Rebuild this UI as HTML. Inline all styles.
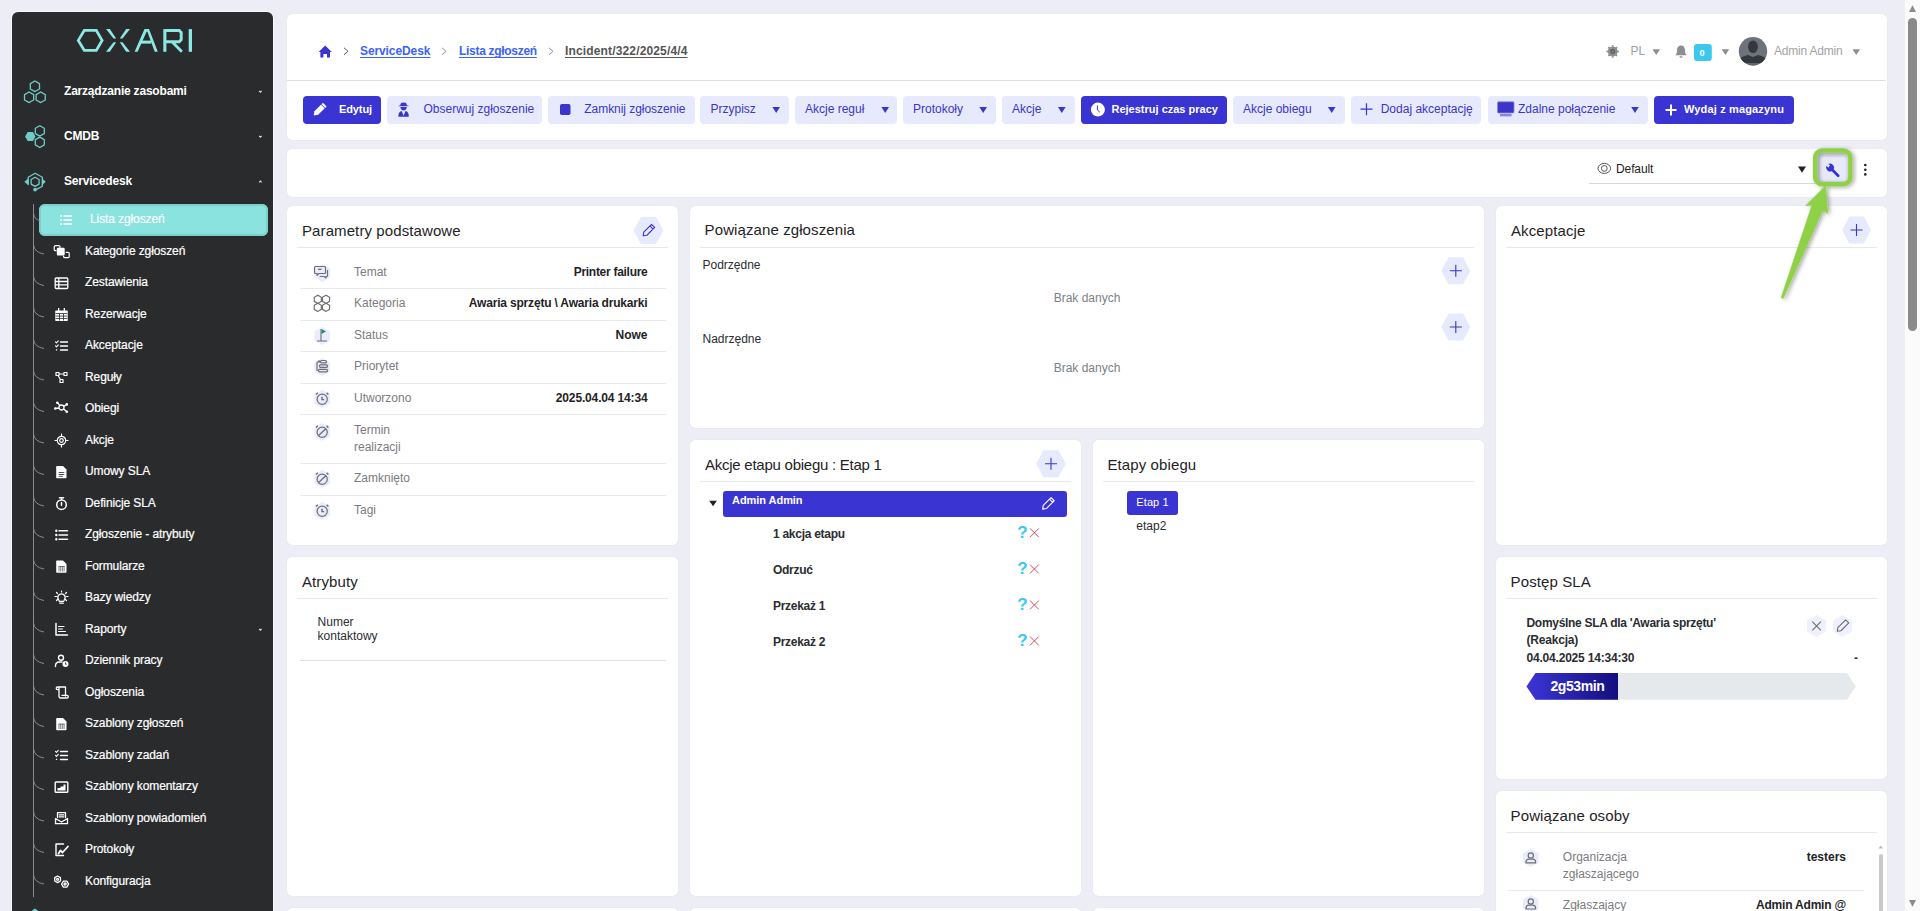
<!DOCTYPE html>
<html><head><meta charset="utf-8">
<style>
*{box-sizing:border-box;margin:0;padding:0}
html,body{width:1920px;height:911px;overflow:hidden;background:#EDEDF6;font-family:"Liberation Sans",sans-serif;position:relative}
.abs{position:absolute}
svg.L{position:absolute;left:0;top:0;width:1920px;height:911px;overflow:visible}
.sb{position:absolute;left:12px;top:12px;width:261px;height:920px;background:#2A2B2D;border-radius:6px;box-shadow:0 0 0 1px #F6F6FB}
.card{position:absolute;background:#fff;border-radius:5px;box-shadow:0 0 1px rgba(0,0,0,.15)}
.t{position:absolute;white-space:nowrap;line-height:14px}
.mi{position:absolute;left:64px;color:#fff;font-size:12px;font-weight:700;letter-spacing:-0.2px;white-space:nowrap;line-height:14px}
.si{position:absolute;left:85px;color:#fff;font-size:12px;font-weight:400;white-space:nowrap;line-height:14px;-webkit-text-stroke:0.2px #fff;letter-spacing:-0.1px}
.btn{position:absolute;top:96px;height:28px;border-radius:4px;background:#E7EAFD;color:#3B35C9;font-size:12px;line-height:28px;white-space:nowrap}
.btn.p{background:#3A34D2;color:#fff;font-weight:700}
.btn span{position:absolute;top:0}
.sep{position:absolute;height:1px;background:#E4E6EB}
.ptitle{position:absolute;font-size:15px;color:#1F2327;white-space:nowrap;line-height:18px}
.lbl{position:absolute;font-size:12px;color:#7B7B80;white-space:nowrap;line-height:17px}
.val{position:absolute;font-size:12px;color:#1F2327;font-weight:700;white-space:nowrap;line-height:14px}
</style></head>
<body>
<div class="sb"></div>
<div class="abs" style="left:39px;top:204px;width:229px;height:32px;background:#8AE3DF;border-radius:6px;box-shadow:inset 0 0 0 2px #7CCFCB"></div>
<svg class="L" viewBox="0 0 1920 911">
<g fill="none" stroke="#8BE8E3" stroke-width="2.8" stroke-linejoin="miter">
<polygon points="78.3,40.4 84.3,30.4 96.3,30.4 102.1,40.4 96.3,50.4 84.3,50.4"/>
</g>
<g fill="#8BE8E3">
<polygon points="106,29 109.8,29 116.2,38.5 113.5,38.5"/>
<polygon points="106,51.8 109.8,51.8 116.2,42.3 113.5,42.3"/>
<polygon points="130,29 126.2,29 119.8,38.5 122.5,38.5"/>
<polygon points="130,51.8 126.2,51.8 119.8,42.3 122.5,42.3"/>
<polygon points="134.6,51.8 137.6,51.8 146.6,31.7 147.4,31.7 154.7,51.8 157.8,51.8 149,29.1 144.5,29.1"/>
<rect x="140.6" y="40.6" width="10.6" height="3"/>
<rect x="163.3" y="29.1" width="3.1" height="22.7"/>
</g>
<path d="M164.8,30.5 H179.2 L181.2,32.6 V39.7 L179.2,41.8 H164.8 M172.5,42.3 L181.9,51.8" fill="none" stroke="#8BE8E3" stroke-width="2.9"/>
<rect x="188.7" y="29.1" width="3.3" height="22.7" fill="#8BE8E3"/>
<g fill="none" stroke="#71CBC6" stroke-width="1.3">
<polygon points="34.90,91.60 30.31,88.95 30.31,83.65 34.90,81.00 39.49,83.65 39.49,88.95"/>
<polygon points="29.10,102.60 24.51,99.95 24.51,94.65 29.10,92.00 33.69,94.65 33.69,99.95"/>
<polygon points="40.70,102.60 36.11,99.95 36.11,94.65 40.70,92.00 45.29,94.65 45.29,99.95"/>
<polygon points="39.80,136.10 35.30,133.50 35.30,128.30 39.80,125.70 44.30,128.30 44.30,133.50"/>
<polygon points="39.80,147.50 35.30,144.90 35.30,139.70 39.80,137.10 44.30,139.70 44.30,144.90"/>
</g>
<polygon points="35.50,136.60 32.90,141.10 27.70,141.10 25.10,136.60 27.70,132.10 32.90,132.10" fill="#71CBC6"/>
<g fill="none" stroke="#71CBC6" stroke-width="1.3" stroke-linejoin="round">
<polygon points="35.10,186.40 31.12,184.10 31.12,179.50 35.10,177.20 39.08,179.50 39.08,184.10"/>
<path d="M28.2,184.6 V177.3 L35.1,173.3 L42.4,177.3 V186.2 L36,189.6"/>
</g>
<g fill="#71CBC6"><polygon points="24.3,181.8 28.6,178.2 28.6,185.4"/><polygon points="45.8,181.8 41.8,178.2 41.8,185.4"/><circle cx="35.1" cy="189.6" r="1.9"/></g>
<g fill="none" stroke="#E6E6E6" stroke-width="1.1"><path d="M259.2,90.9 L260.4,92.2 L261.6,90.9"/><path d="M259.2,135.9 L260.4,137.2 L261.6,135.9"/><path d="M259.2,182.3 L260.4,181 L261.6,182.3"/><path d="M259.2,628.9 L260.4,630.2 L261.6,628.9"/></g>
<g fill="none" stroke="#8A8A8A" stroke-width="1">
<path d="M33.5,204 V897"/>
<path d="M33.5,213.5 Q34.5,219.5 39.5,220.5"/>
<path d="M33.5,245.0 Q34.5,252.5 44,254.0"/>
<path d="M33.5,276.5 Q34.5,284.0 44,285.5"/>
<path d="M33.5,308.0 Q34.5,315.5 44,317.0"/>
<path d="M33.5,339.5 Q34.5,347.0 44,348.5"/>
<path d="M33.5,371.0 Q34.5,378.5 44,380.0"/>
<path d="M33.5,402.5 Q34.5,410.0 44,411.5"/>
<path d="M33.5,434.0 Q34.5,441.5 44,443.0"/>
<path d="M33.5,465.5 Q34.5,473.0 44,474.5"/>
<path d="M33.5,497.0 Q34.5,504.5 44,506.0"/>
<path d="M33.5,528.5 Q34.5,536.0 44,537.5"/>
<path d="M33.5,560.0 Q34.5,567.5 44,569.0"/>
<path d="M33.5,591.5 Q34.5,599.0 44,600.5"/>
<path d="M33.5,623.0 Q34.5,630.5 44,632.0"/>
<path d="M33.5,654.5 Q34.5,662.0 44,663.5"/>
<path d="M33.5,686.0 Q34.5,693.5 44,695.0"/>
<path d="M33.5,717.5 Q34.5,725.0 44,726.5"/>
<path d="M33.5,749.0 Q34.5,756.5 44,758.0"/>
<path d="M33.5,780.5 Q34.5,788.0 44,789.5"/>
<path d="M33.5,812.0 Q34.5,819.5 44,821.0"/>
<path d="M33.5,843.5 Q34.5,851.0 44,852.5"/>
<path d="M33.5,875.0 Q34.5,882.5 44,884.0"/>
</g>
<g transform="translate(61.5,251.5)"><path d="M-6,-5.8 h3.2 a1.3,1.3 0 0 1 1.3,1.3 v0.5 M-5.5,-0.8 h-0.5 a1.3,1.3 0 0 1 -1.3,-1.3 v-2.4 a1.3,1.3 0 0 1 1.3,-1.3" fill="none" stroke="#fff" stroke-width="1.2" stroke-linecap="round" stroke-linejoin="round"/><path d="M-3.5,-3.8 h5.5 a1.2,1.2 0 0 1 1.2,1.2 v5.3 a1.2,1.2 0 0 1 -1.2,1.2 h-5.5 a1.2,1.2 0 0 1 -1.2,-1.2 v-5.3 a1.2,1.2 0 0 1 1.2,-1.2z" fill="#fff"/><path d="M4.6,0.8 h1.8 a1.3,1.3 0 0 1 1.3,1.3 v2.8 a1.3,1.3 0 0 1 -1.3,1.3 h-3 a1.3,1.3 0 0 1 -1.3,-1.3 v-0.3" fill="none" stroke="#fff" stroke-width="1.2" stroke-linecap="round" stroke-linejoin="round"/></g>
<g transform="translate(61.5,283.0)"><path d="M-5.3,-5 h10.6 a1,1 0 0 1 1,1 v8.5 a1,1 0 0 1 -1,1 h-10.6 a1,1 0 0 1 -1,-1 v-8.5 a1,1 0 0 1 1,-1z M-6,-1.5 H6 M-6,1.8 H6 M-2.7,-5 V5.5" fill="none" stroke="#fff" stroke-width="1.3" stroke-linecap="round" stroke-linejoin="round"/></g>
<g transform="translate(61.5,314.5)"><path d="M-5.5,-4 h11 a0.8,0.8 0 0 1 .8,.8 v9 a.8,.8 0 0 1 -.8,.8 h-11 a.8,.8 0 0 1 -.8,-.8 v-9 a.8,.8 0 0 1 .8,-.8z M-3.5,-6.5 h1.3 v2.5 h-1.3z M2.2,-6.5 h1.3 v2.5 h-1.3z" fill="#fff"/><path d="M-6,-1 H6 M-6,1.6 H6 M-6,4 H6 M-2,-1 V6 M2,-1 V6" stroke="#2A2B2D" stroke-width="0.8"/></g>
<g transform="translate(61.5,346.0)"><path d="M-6,-4.2 L-5,-3.2 L-3.2,-5.2 M-6,-0.2 L-5,0.8 L-3.2,-1.2" fill="none" stroke="#fff" stroke-width="1.1" stroke-linecap="round" stroke-linejoin="round"/><path d="M-1,-4 H6 M-1,0 H6 M-1,4 H6" fill="none" stroke="#fff" stroke-width="1.4" stroke-linecap="round" stroke-linejoin="round"/><path d="M-5.6,3.2 h1.3 v1.3 h-1.3z" fill="#fff"/></g>
<g transform="translate(61.5,377.5)"><path d="M-5.5,-5 h3 v3 h-3z M2.5,-5 h3 v3 h-3z M-1.5,2 h3 v3 h-3z M-2.5,-3.5 H2.5 M-3.5,-2 L-1,2" fill="none" stroke="#fff" stroke-width="1.2" stroke-linecap="round" stroke-linejoin="round"/></g>
<g transform="translate(61.5,409.0)"><path d="M0,-1.5 m-2.5,0 a2.5,2.5 0 1 0 5,0 a2.5,2.5 0 1 0 -5,0 M-2,-3.5 L-3.5,-6 M2.2,-2.5 L5,-4.5 M2.2,0 L5,2.5 M-2.5,-1 L-6,-0.5" fill="none" stroke="#fff" stroke-width="1.3" stroke-linecap="round" stroke-linejoin="round"/><path d="M-4.2,-6.2 m-1.3,0 a1.3,1.3 0 1 0 2.6,0 a1.3,1.3 0 1 0 -2.6,0 M5.3,-4.6 m-1.3,0 a1.3,1.3 0 1 0 2.6,0 a1.3,1.3 0 1 0 -2.6,0 M5.3,2.8 m-1.3,0 a1.3,1.3 0 1 0 2.6,0 a1.3,1.3 0 1 0 -2.6,0 M-6.2,-0.5 m-1.3,0 a1.3,1.3 0 1 0 2.6,0 a1.3,1.3 0 1 0 -2.6,0" fill="#fff"/></g>
<g transform="translate(61.5,440.5)"><path d="M-4.2,0 a4.2,4.2 0 1 0 8.4,0 a4.2,4.2 0 1 0 -8.4,0 M-1.8,0 a1.8,1.8 0 1 0 3.6,0 a1.8,1.8 0 1 0 -3.6,0 M0,-6.5 V-4.2 M0,4.2 V6.5 M-6.5,0 H-4.2 M4.2,0 H6.5" fill="none" stroke="#fff" stroke-width="1.2" stroke-linecap="round" stroke-linejoin="round"/></g>
<g transform="translate(61.5,472.0)"><path d="M-4.5,-6 h6 l3.5,3.5 v8 a.8,.8 0 0 1 -.8,.8 h-8.7 a.8,.8 0 0 1 -.8,-.8 v-10.7 a.8,.8 0 0 1 .8,-.8z" fill="#fff"/><path d="M-2.8,0.5 H2.8 M-2.8,2.5 H2.8 M-2.8,4.3 H1.5" stroke="#2A2B2D" stroke-width="0.8"/></g>
<g transform="translate(61.5,503.5)"><path d="M0,1.2 m-4.8,0 a4.8,4.8 0 1 0 9.6,0 a4.8,4.8 0 1 0 -9.6,0 M-2,-5.8 H2 M0,-5.8 V-3.6 M0,-1 V1.8" fill="none" stroke="#fff" stroke-width="1.5" stroke-linecap="round" stroke-linejoin="round"/></g>
<g transform="translate(61.5,535.0)"><path d="M-2.5,-4.2 H6 M-2.5,0 H6 M-2.5,4.2 H6" fill="none" stroke="#fff" stroke-width="1.5" stroke-linecap="round" stroke-linejoin="round"/><path d="M-5.2,-4.2 m-1.2,0 a1.2,1.2 0 1 0 2.4,0 a1.2,1.2 0 1 0 -2.4,0 M-5.2,0 m-1.2,0 a1.2,1.2 0 1 0 2.4,0 a1.2,1.2 0 1 0 -2.4,0 M-5.2,4.2 m-1.2,0 a1.2,1.2 0 1 0 2.4,0 a1.2,1.2 0 1 0 -2.4,0" fill="#fff"/></g>
<g transform="translate(61.5,566.5)"><path d="M-4.5,-6 h6 l3.5,3.5 v8 a.8,.8 0 0 1 -.8,.8 h-8.7 a.8,.8 0 0 1 -.8,-.8 v-10.7 a.8,.8 0 0 1 .8,-.8z" fill="#fff"/><path d="M-2.5,0 V5 M-0.8,0 V5 M0.9,0 V5 M2.6,0 V5 M-3,0 H3" stroke="#2A2B2D" stroke-width="0.6"/></g>
<g transform="translate(61.5,598.0)"><path d="M-3,1.5 a3.6,3.6 0 1 1 6,0 l-0.8,1.8 h-4.4z M-1.8,5.2 H1.8 M-6.5,-1.5 H-5 M5,-1.5 H6.5 M-5,-5.5 L-4,-4.5 M5,-5.5 L4,-4.5 M-5,2.5 L-4,1.5 M5,2.5 L4,1.5 M0,-7 V-6" fill="none" stroke="#fff" stroke-width="1.2" stroke-linecap="round" stroke-linejoin="round"/></g>
<g transform="translate(61.5,629.5)"><path d="M-5.5,-6 V5.5 H6" fill="none" stroke="#fff" stroke-width="1.5" stroke-linecap="round" stroke-linejoin="round"/><path d="M-3,-3 H2.5 M-3,-0.5 H1 M-3,2 H4" fill="none" stroke="#fff" stroke-width="1.1" stroke-linecap="round" stroke-linejoin="round"/></g>
<g transform="translate(61.5,661.0)"><path d="M-3,-3.3 a2.5,2.5 0 1 0 5,0 a2.5,2.5 0 1 0 -5,0 M-6,5.5 v-1 a3.5,3.5 0 0 1 3.5,-3.5 h3" fill="none" stroke="#fff" stroke-width="1.4" stroke-linecap="round" stroke-linejoin="round"/><path d="M4,3 m-3,0 a3,3 0 1 0 6,0 a3,3 0 1 0 -6,0" fill="#fff"/><path d="M4,1.3 V3.2 H5.3" stroke="#2A2B2D" stroke-width="0.8" fill="none"/></g>
<g transform="translate(61.5,692.5)"><path d="M-4,-5.5 H4 V3.5 M-4,-5.5 a1.3,1.3 0 0 0 -1.3,1.3 a1.3,1.3 0 0 0 1.3,1.3 H-2.5 M-2.5,-4.5 V4 a1.5,1.5 0 0 0 1.5,1.5 H5.5 a1.3,1.3 0 0 0 0,-2.6 H0.5" fill="none" stroke="#fff" stroke-width="1.3" stroke-linecap="round" stroke-linejoin="round"/></g>
<g transform="translate(61.5,724.0)"><path d="M-4.5,-6 h6 l3.5,3.5 v8 a.8,.8 0 0 1 -.8,.8 h-8.7 a.8,.8 0 0 1 -.8,-.8 v-10.7 a.8,.8 0 0 1 .8,-.8z" fill="#fff"/><path d="M-2.5,0 V5 M-0.8,0 V5 M0.9,0 V5 M2.6,0 V5 M-3,0 H3" stroke="#2A2B2D" stroke-width="0.6"/></g>
<g transform="translate(61.5,755.5)"><path d="M-6,-4.2 L-5,-3.2 L-3.2,-5.2 M-6,-0.2 L-5,0.8 L-3.2,-1.2" fill="none" stroke="#fff" stroke-width="1.1" stroke-linecap="round" stroke-linejoin="round"/><path d="M-1,-4 H6 M-1,0 H6 M-1,4 H6" fill="none" stroke="#fff" stroke-width="1.4" stroke-linecap="round" stroke-linejoin="round"/><path d="M-5.6,3.2 h1.3 v1.3 h-1.3z" fill="#fff"/></g>
<g transform="translate(61.5,787.0)"><path d="M-5.5,-5 h11 a.8,.8 0 0 1 .8,.8 v8.6 a.8,.8 0 0 1 -.8,.8 h-11 a.8,.8 0 0 1 -.8,-.8 v-8.6 a.8,.8 0 0 1 .8,-.8z" fill="none" stroke="#fff" stroke-width="1.4" stroke-linecap="round" stroke-linejoin="round"/><path d="M-4,3.5 v-2.5 h3 v-1.5 h3 v-2 h2 v6z" fill="#fff"/></g>
<g transform="translate(61.5,818.5)"><path d="M-6,0 V5.2 H6 V0 L0,3.5 Z M-4,-1 V-5.8 H4 V-1 M-2.2,-3.6 H2.2 M-2.2,-1.6 H2.2" fill="none" stroke="#fff" stroke-width="1.3" stroke-linecap="round" stroke-linejoin="round"/></g>
<g transform="translate(61.5,850.0)"><path d="M2,-6 H-5.5 V5.5 H2 M-5.5,5.5 V-6" fill="none" stroke="#fff" stroke-width="1.4" stroke-linecap="round" stroke-linejoin="round"/><path d="M-3,3.5 L-1,0.5 L1,2.5 L6.5,-3.5" fill="none" stroke="#fff" stroke-width="1.8" stroke-linecap="round" stroke-linejoin="round"/></g>
<g transform="translate(61.5,881.5)"><g fill="none" stroke="#fff" stroke-width="1.3" stroke-linejoin="round"><polygon points="-1.04,-0.55 -3.90,1.10 -6.76,-0.55 -6.76,-3.85 -3.90,-5.50 -1.04,-3.85"/><polygon points="7.10,2.60 5.35,5.63 1.85,5.63 0.10,2.60 1.85,-0.43 5.35,-0.43"/><circle cx="-3.9" cy="-2.2" r="1"/><circle cx="3.6" cy="2.6" r="1.1"/></g></g>
<g transform="translate(66,220)" fill="#fff"><circle cx="-5" cy="-4" r="1.1"/><circle cx="-5" cy="0" r="1.1"/><circle cx="-5" cy="4" r="1.1"/><path d="M-2.5,-4 H6 M-2.5,0 H6 M-2.5,4 H6" stroke="#fff" stroke-width="1.4"/></g>
</svg>
<div class="si" style="left:90px;top:212px;-webkit-text-stroke:0.15px #fff">Lista zgłoszeń</div>
<div class="mi" style="top:84px">Zarządzanie zasobami</div>
<div class="mi" style="top:129px">CMDB</div>
<div class="mi" style="top:174px">Servicedesk</div>
<div class="si" style="top:243.9px">Kategorie zgłoszeń</div>
<div class="si" style="top:275.4px">Zestawienia</div>
<div class="si" style="top:306.9px">Rezerwacje</div>
<div class="si" style="top:338.4px">Akceptacje</div>
<div class="si" style="top:369.9px">Reguły</div>
<div class="si" style="top:401.4px">Obiegi</div>
<div class="si" style="top:432.9px">Akcje</div>
<div class="si" style="top:464.4px">Umowy SLA</div>
<div class="si" style="top:495.9px">Definicje SLA</div>
<div class="si" style="top:527.4px">Zgłoszenie - atrybuty</div>
<div class="si" style="top:558.9px">Formularze</div>
<div class="si" style="top:590.4px">Bazy wiedzy</div>
<div class="si" style="top:621.9px">Raporty</div>
<div class="si" style="top:653.4px">Dziennik pracy</div>
<div class="si" style="top:684.9px">Ogłoszenia</div>
<div class="si" style="top:716.4px">Szablony zgłoszeń</div>
<div class="si" style="top:747.9px">Szablony zadań</div>
<div class="si" style="top:779.4px">Szablony komentarzy</div>
<div class="si" style="top:810.9px">Szablony powiadomień</div>
<div class="si" style="top:842.4px">Protokoły</div>
<div class="si" style="top:873.9px">Konfiguracja</div>
<div class="card" style="left:287px;top:14px;width:1600px;height:126px"></div>
<div class="sep" style="left:287px;top:80px;width:1599px;background:#DDE1E6"></div>
<div class="card" style="left:287px;top:149px;width:1600px;height:48px"></div>
<div class="t" style="left:360px;top:44px;font-size:12px;font-weight:700;text-decoration:underline;text-underline-offset:2px;text-decoration-thickness:1px;color:#3D63F5;letter-spacing:-0.1px">ServiceDesk</div>
<div class="t" style="left:459px;top:44px;font-size:12px;font-weight:700;text-decoration:underline;text-underline-offset:2px;text-decoration-thickness:1px;color:#3D63F5;letter-spacing:-0.3px">Lista zgłoszeń</div>
<div class="t" style="left:565px;top:44px;font-size:12px;font-weight:700;text-decoration:underline;text-underline-offset:2px;text-decoration-thickness:1px;color:#555;letter-spacing:0.15px">Incident/322/2025/4/4</div>
<div class="btn p" style="left:303px;width:78px"></div>
<div class="btn " style="left:387px;width:155px"></div>
<div class="btn " style="left:548px;width:147px"></div>
<div class="btn " style="left:700px;width:89px"></div>
<div class="btn " style="left:795px;width:102px"></div>
<div class="btn " style="left:903px;width:93px"></div>
<div class="btn " style="left:1002px;width:73px"></div>
<div class="btn p" style="left:1081px;width:146px"></div>
<div class="btn " style="left:1233px;width:111.5px"></div>
<div class="btn " style="left:1350.5px;width:130.5px"></div>
<div class="btn " style="left:1488px;width:160px"></div>
<div class="btn p" style="left:1654px;width:140px"></div>
<svg class="L" viewBox="0 0 1920 911">
<path d="M318.7,52 L325.2,45.6 L331.8,52 H330 V57.6 H327 V54 H323.4 V57.6 H320.4 V52 Z" fill="#3A34D2"/>
<path d="M344,47.8 L348,51.3 L344,54.8" fill="none" stroke="#555" stroke-width="1"/>
<path d="M442,47.8 L446,51.3 L442,54.8" fill="none" stroke="#8C88E8" stroke-width="1"/>
<path d="M549,47.8 L553,51.3 L549,54.8" fill="none" stroke="#8C88E8" stroke-width="1"/>
<polygon points="1617.19,50.50 1618.86,50.76 1618.86,52.24 1617.19,52.50 1616.58,53.96 1617.58,55.33 1616.53,56.38 1615.16,55.38 1613.70,55.99 1613.44,57.66 1611.96,57.66 1611.70,55.99 1610.24,55.38 1608.87,56.38 1607.82,55.33 1608.82,53.96 1608.21,52.50 1606.54,52.24 1606.54,50.76 1608.21,50.50 1608.82,49.04 1607.82,47.67 1608.87,46.62 1610.24,47.62 1611.70,47.01 1611.96,45.34 1613.44,45.34 1613.70,47.01 1615.16,47.62 1616.53,46.62 1617.58,47.67 1616.58,49.04" fill="#8E8E8E"/><circle cx="1612.7" cy="51.5" r="4.8" fill="#8E8E8E"/><circle cx="1612.7" cy="51.5" r="2.4" fill="#5A5A5A"/><circle cx="1612.7" cy="51.5" r="1.3" fill="#fff" fill-opacity="0.25"/>
<path d="M1652.5,49.2 H1660 L1656.25,55 Z" fill="#8E8E8E"/>
<path d="M1675.2,55.2 C1676.8,54 1677,52.5 1677,50 C1677,47.5 1678.7,45.6 1681,45.6 C1683.3,45.6 1685,47.5 1685,50 C1685,52.5 1685.2,54 1686.8,55.2 Z M1679.4,56.2 H1682.6 A1.6,1.6 0 0 1 1679.4,56.2 Z" fill="#8E8E8E"/>
<rect x="1694" y="44" width="17.8" height="17" rx="3" fill="#3CC8EE"/>
<path d="M1721.7,49.2 H1729.2 L1725.45,55 Z" fill="#8E8E8E"/>
<clipPath id="av"><circle cx="1753" cy="51.3" r="14.2"/></clipPath><circle cx="1753" cy="51.3" r="14.2" fill="#6C737A"/><g clip-path="url(#av)" fill="#34373B"><ellipse cx="1753" cy="46.8" rx="4.9" ry="6.3"/><path d="M1738,63 C1739,58 1743,56 1748,55 L1753,57 L1758,55 C1763,56 1767,58 1768,63 Z"/><rect x="1738" y="63" width="30" height="4" fill="#5F666C"/></g>
<path d="M1852.5,49.2 H1860 L1856.25,55 Z" fill="#8E8E8E"/>
<g transform="translate(319.8,109.5) rotate(45)"><path d="M-2.6,-7 H2.6 V5 L0,8.6 L-2.6,5 Z" fill="#fff"/><path d="M-2.6,-4.6 H2.6" stroke="#3A34D2" stroke-width="0.9"/></g>
<g fill="#3B35C9" transform="translate(403.6,109.6) scale(0.82) translate(-403.6,-109.4)"><path d="M399.5,104.3 C400,101.5 400.6,100.7 403.6,100.7 C406.6,100.7 407.2,101.5 407.7,104.3 H409.5 V105.4 H397.7 V104.3 Z"/><path d="M399.8,106.2 H407.4 C407.4,108.8 405.8,110.6 403.6,110.6 C401.4,110.6 399.8,108.8 399.8,106.2 Z"/><path d="M397.2,118.2 C397.2,113.5 398.5,111.4 401.3,111 L403.6,117 L405.9,111 C408.7,111.4 410,113.5 410,118.2 Z"/></g>
<rect x="560" y="104" width="10.5" height="11" rx="1.8" fill="#3B35C9"/>
<path d="M772.4,107 H780.0 L776.1999999999999,113 Z" fill="#3B35C9"/>
<path d="M881.4,107 H889.0 L885.1999999999999,113 Z" fill="#3B35C9"/>
<path d="M979.4,107 H987.0 L983.1999999999999,113 Z" fill="#3B35C9"/>
<path d="M1058,107 H1065.6 L1061.8,113 Z" fill="#3B35C9"/>
<path d="M1327.9,107 H1335.5 L1331.7,113 Z" fill="#3B35C9"/>
<path d="M1631.2,107 H1638.8 L1635.0,113 Z" fill="#3B35C9"/>
<circle cx="1097.9" cy="109.6" r="7" fill="#fff"/><path d="M1097.4,105.5 V110 L1099.8,112.2" fill="none" stroke="#3A34D2" stroke-width="1"/>
<path d="M1366.5,103.2 V115.2 M1360.5,109.2 H1372.5" stroke="#3B35C9" stroke-width="1.2"/>
<rect x="1497.5" y="101.8" width="16.5" height="11.2" rx="1" fill="#3B35C9" stroke="#8B87E0" stroke-width="0.8"/><rect x="1500" y="113.8" width="11.5" height="2.6" fill="#8B87E0"/>
<path d="M1671,104.5 V115.5 M1665.5,110 H1676.5" stroke="#fff" stroke-width="2"/>
</svg>
<svg class="L" viewBox="0 0 1920 911">
<g fill="none" stroke="#555" stroke-width="1"><ellipse cx="1604.3" cy="168.4" rx="6.3" ry="5"/><circle cx="1604.3" cy="168.4" r="2.9"/></g>
<path d="M1798,166.6 H1806 L1802,172.8 Z" fill="#222"/>
<g fill="#222"><circle cx="1865.3" cy="165" r="1.3"/><circle cx="1865.3" cy="169.7" r="1.3"/><circle cx="1865.3" cy="174.4" r="1.3"/></g>
</svg>
<div class="t" style="left:339px;top:102px;font-size:12px;color:#fff;font-weight:700;font-size:11px;letter-spacing:-0.1px">Edytuj</div>
<div class="t" style="left:423.5px;top:102px;font-size:12px;color:#3B35C9;font-weight:400;">Obserwuj zgłoszenie</div>
<div class="t" style="left:584.3px;top:102px;font-size:12px;color:#3B35C9;font-weight:400;letter-spacing:-0.05px">Zamknij zgłoszenie</div>
<div class="t" style="left:710.5px;top:102px;font-size:12px;color:#3B35C9;font-weight:400;">Przypisz</div>
<div class="t" style="left:805px;top:102px;font-size:12px;color:#3B35C9;font-weight:400;">Akcje reguł</div>
<div class="t" style="left:913px;top:102px;font-size:12px;color:#3B35C9;font-weight:400;">Protokoły</div>
<div class="t" style="left:1012px;top:102px;font-size:12px;color:#3B35C9;font-weight:400;">Akcje</div>
<div class="t" style="left:1111.5px;top:102px;font-size:12px;color:#fff;font-weight:700;font-size:11px">Rejestruj czas pracy</div>
<div class="t" style="left:1243px;top:102px;font-size:12px;color:#3B35C9;font-weight:400;">Akcje obiegu</div>
<div class="t" style="left:1380.7px;top:102px;font-size:12px;color:#3B35C9;font-weight:400;">Dodaj akceptację</div>
<div class="t" style="left:1518px;top:102px;font-size:12px;color:#3B35C9;font-weight:400;">Zdalne połączenie</div>
<div class="t" style="left:1684px;top:102px;font-size:12px;color:#fff;font-weight:700;font-size:11px;letter-spacing:0.15px">Wydaj z magazynu</div>
<div class="t" style="left:1630.5px;top:43.5px;font-size:12px;color:#A0A0A0">PL</div>
<div class="t" style="left:1699.5px;top:46px;font-size:9px;color:#fff;font-weight:700">0</div>
<div class="t" style="left:1774px;top:43.5px;font-size:12px;color:#A3A3A3;letter-spacing:-0.2px">Admin Admin</div>
<div class="abs" style="left:1589px;top:183px;width:226px;height:1px;background:#D5D9DF"></div>
<div class="t" style="left:1616px;top:162px;font-size:12px;color:#222;letter-spacing:-0.1px">Default</div>
<div class="card" style="left:287px;top:206px;width:391px;height:339px"></div>
<div class="card" style="left:690px;top:206px;width:794px;height:222px"></div>
<div class="card" style="left:1496px;top:206px;width:391px;height:339px"></div>
<div class="card" style="left:690px;top:440px;width:391px;height:456px"></div>
<div class="card" style="left:1093px;top:440px;width:391px;height:456px"></div>
<div class="card" style="left:287px;top:557px;width:391px;height:339px"></div>
<div class="card" style="left:1496px;top:557px;width:391px;height:222px"></div>
<div class="card" style="left:1496px;top:791px;width:391px;height:200px"></div>
<div class="card" style="left:287px;top:908px;width:391px;height:100px"></div>
<div class="card" style="left:690px;top:908px;width:391px;height:100px"></div>
<div class="card" style="left:1093px;top:908px;width:391px;height:100px"></div>
<div class="sep" style="left:297px;top:247px;width:371px;background:#E6E8EC"></div>
<div class="sep" style="left:300px;top:288px;width:366px;background:#E8E9EE"></div>
<div class="sep" style="left:300px;top:320px;width:366px;background:#E8E9EE"></div>
<div class="sep" style="left:300px;top:351px;width:366px;background:#E8E9EE"></div>
<div class="sep" style="left:300px;top:383px;width:366px;background:#E8E9EE"></div>
<div class="sep" style="left:300px;top:414px;width:366px;background:#E8E9EE"></div>
<div class="sep" style="left:300px;top:463px;width:366px;background:#E8E9EE"></div>
<div class="sep" style="left:300px;top:495px;width:366px;background:#E8E9EE"></div>
<div class="sep" style="left:700px;top:247px;width:774px;background:#E6E8EC"></div>
<div class="sep" style="left:1506px;top:247px;width:371px;background:#E6E8EC"></div>
<div class="sep" style="left:700px;top:481px;width:371px;background:#E6E8EC"></div>
<div class="abs" style="left:723px;top:491px;width:344px;height:26px;background:#3A34D2;border-radius:3px"></div>
<div class="sep" style="left:1103px;top:481px;width:371px;background:#E6E8EC"></div>
<div class="abs" style="left:1127px;top:491px;width:51px;height:24px;background:#3A34D2;border-radius:3px"></div>
<div class="sep" style="left:297px;top:598px;width:371px;background:#E6E8EC"></div>
<div class="sep" style="left:300px;top:660px;width:366px;background:#DDDFE3"></div>
<div class="sep" style="left:1506px;top:598px;width:371px;background:#E6E8EC"></div>
<div class="sep" style="left:1506px;top:832px;width:371px;background:#E6E8EC"></div>
<div class="sep" style="left:1508px;top:890px;width:356px;background:#E8E9EE"></div>
<div class="abs" style="left:1878.5px;top:854px;width:4.5px;height:70px;background:#C8C8C8;border-radius:2px"></div>
<svg class="L" viewBox="0 0 1920 911"><polygon points="633.50,230.50 641.00,217.00 656.00,217.00 663.50,230.50 656.00,244.00 641.00,244.00" fill="#E6EAFD"/>
<g transform="translate(648.5,230.5) rotate(45)"><path d="M-2.2,-6.5 H2.2 V4.5 L0,7.5 L-2.2,4.5 Z M-2.2,-4.3 H2.2" fill="none" stroke="#3B35C9" stroke-width="1.1" stroke-linejoin="round"/></g>
<polygon points="322.20,281.90 314.41,277.40 314.41,268.40 322.20,263.90 329.99,268.40 329.99,277.40" fill="#E9ECFD"/>
<polygon points="322.20,344.90 314.41,340.40 314.41,331.40 322.20,326.90 329.99,331.40 329.99,340.40" fill="#E9ECFD"/>
<polygon points="322.20,375.90 314.41,371.40 314.41,362.40 322.20,357.90 329.99,362.40 329.99,371.40" fill="#E9ECFD"/>
<polygon points="322.20,407.90 314.41,403.40 314.41,394.40 322.20,389.90 329.99,394.40 329.99,403.40" fill="#E9ECFD"/>
<polygon points="322.20,440.90 314.41,436.40 314.41,427.40 322.20,422.90 329.99,427.40 329.99,436.40" fill="#E9ECFD"/>
<polygon points="322.20,487.90 314.41,483.40 314.41,474.40 322.20,469.90 329.99,474.40 329.99,483.40" fill="#E9ECFD"/>
<polygon points="322.20,519.90 314.41,515.40 314.41,506.40 322.20,501.90 329.99,506.40 329.99,515.40" fill="#E9ECFD"/>
<g fill="none" stroke="#6E6E73" stroke-width="1.2" stroke-linejoin="round"><path d="M315.5,266.5 h9 a1,1 0 0 1 1,1 v5 a1,1 0 0 1 -1,1 h-5.5 l-2,1.8 v-1.8 h-1.5 a1,1 0 0 1 -1,-1 v-5 a1,1 0 0 1 1,-1z"/><path d="M327.5,270 v5.5 a1,1 0 0 1 -1,1 h-0.5 v1.5 l-1.8,-1.5 h-4.5"/></g><path d="M318,269.3 h3.5" stroke="#6E6E73" stroke-width="1.3"/>
<polygon points="317.80,303.40 314.25,301.35 314.25,297.25 317.80,295.20 321.35,297.25 321.35,301.35" fill="none" stroke="#6E6E73" stroke-width="1.2"/>
<polygon points="326.00,303.40 322.45,301.35 322.45,297.25 326.00,295.20 329.55,297.25 329.55,301.35" fill="none" stroke="#6E6E73" stroke-width="1.2"/>
<polygon points="317.80,311.40 314.25,309.35 314.25,305.25 317.80,303.20 321.35,305.25 321.35,309.35" fill="none" stroke="#6E6E73" stroke-width="1.2"/>
<polygon points="326.00,311.40 322.45,309.35 322.45,305.25 326.00,303.20 329.55,305.25 329.55,309.35" fill="none" stroke="#6E6E73" stroke-width="1.2"/>
<path d="M321,329 V340.5 M317,341 H327" stroke="#6E6E73" stroke-width="1.1" fill="none"/><path d="M321.5,329 L326,331.6 L321.5,334 Z" fill="#1E8C6E"/>
<g fill="none" stroke="#6E6E73" stroke-width="1.2"><rect x="320.5" y="360.5" width="6" height="2.3" rx="1"/><rect x="319.5" y="364.8" width="8" height="2.5" rx="1"/><rect x="318.5" y="369.3" width="9" height="2.5" rx="1"/><path d="M317,371 V363.5 a2,2 0 0 1 2,-2 h0.5 M318.5,360.5 l1.3,1 l-1.3,1"/></g>
<g fill="none" stroke="#6E6E73" stroke-width="1.2"><circle cx="322.2" cy="399.2" r="5.1"/><path d="M317.8,392.8 l-1.8,1.5 M326.6,392.8 l1.8,1.5" stroke-width="1.5"/><path d="M322,396.7 V399.6 H324.2" stroke-width="1.4"/></g>
<g fill="none" stroke="#6E6E73" stroke-width="1.2"><circle cx="322.2" cy="432.2" r="5.1"/><path d="M317.8,425.8 l-1.8,1.5 M326.6,425.8 l1.8,1.5" stroke-width="1.5"/><path d="M318.6,435.6 L325.8,428.8" stroke-width="1.4"/></g>
<g fill="none" stroke="#6E6E73" stroke-width="1.2"><circle cx="322.2" cy="479.2" r="5.1"/><path d="M317.8,472.8 l-1.8,1.5 M326.6,472.8 l1.8,1.5" stroke-width="1.5"/><path d="M318.6,482.6 L325.8,475.8" stroke-width="1.4"/></g>
<g fill="none" stroke="#6E6E73" stroke-width="1.2"><circle cx="322.2" cy="511.2" r="5.1"/><path d="M317.8,504.8 l-1.8,1.5 M326.6,504.8 l1.8,1.5" stroke-width="1.5"/><path d="M322,508.7 V511.6 H324.2" stroke-width="1.4"/></g>
<polygon points="1441.30,270.80 1448.55,257.30 1463.05,257.30 1470.30,270.80 1463.05,284.30 1448.55,284.30" fill="#E6EAFD"/><path d="M1449.8,270.8 H1461.8 M1455.8,264.8 V276.8" stroke="#3B35C9" stroke-width="1.1"/>
<polygon points="1441.30,327.00 1448.55,313.50 1463.05,313.50 1470.30,327.00 1463.05,340.50 1448.55,340.50" fill="#E6EAFD"/><path d="M1449.8,327 H1461.8 M1455.8,321 V333" stroke="#3B35C9" stroke-width="1.1"/>
<polygon points="1842.00,230.00 1849.25,216.50 1863.75,216.50 1871.00,230.00 1863.75,243.50 1849.25,243.50" fill="#E6EAFD"/><path d="M1850.5,230 H1862.5 M1856.5,224 V236" stroke="#3B35C9" stroke-width="1.1"/>
<polygon points="1036.20,463.70 1043.60,450.20 1058.40,450.20 1065.80,463.70 1058.40,477.20 1043.60,477.20" fill="#E6EAFD"/><path d="M1045,463.7 H1057 M1051,457.7 V469.7" stroke="#3B35C9" stroke-width="1.1"/>
<path d="M709.2,500.8 H716.9 L713.05,506.3 Z" fill="#222"/>
<g transform="translate(1048,503.8) rotate(45)"><path d="M-2.2,-6.5 H2.2 V4.5 L0,7.5 L-2.2,4.5 Z M-2.2,-4.3 H2.2" fill="none" stroke="#fff" stroke-width="1.1" stroke-linejoin="round"/></g>
<path d="M1030,528.4000000000001 L1038.8,537.2 M1038.8,528.4000000000001 L1030,537.2" stroke="#DC4A5C" stroke-width="1"/>
<path d="M1030,564.6 L1038.8,573.4 M1038.8,564.6 L1030,573.4" stroke="#DC4A5C" stroke-width="1"/>
<path d="M1030,600.6 L1038.8,609.4 M1038.8,600.6 L1030,609.4" stroke="#DC4A5C" stroke-width="1"/>
<path d="M1030,636.5 L1038.8,645.3 M1038.8,636.5 L1030,645.3" stroke="#DC4A5C" stroke-width="1"/>
<polygon points="1816.60,637.00 1807.07,631.50 1807.07,620.50 1816.60,615.00 1826.13,620.50 1826.13,631.50" fill="#EEF0FD"/><path d="M1812.3,621.7 L1820.9,630.3 M1820.9,621.7 L1812.3,630.3" stroke="#6E6E73" stroke-width="1.1"/>
<polygon points="1842.60,637.00 1833.07,631.50 1833.07,620.50 1842.60,615.00 1852.13,620.50 1852.13,631.50" fill="#EEF0FD"/><g transform="translate(1842.6,626) rotate(45)"><path d="M-2.2,-6.5 H2.2 V4.5 L0,7.5 L-2.2,4.5 Z" fill="none" stroke="#6E6E73" stroke-width="1.1" stroke-linejoin="round"/></g>
<defs><linearGradient id="slag" x1="0" x2="1"><stop offset="0" stop-color="#3C35D8"/><stop offset="1" stop-color="#140F7E"/></linearGradient></defs>
<polygon points="1526.5,686.4 1535.5,673 1847,673 1855.8,686.4 1847,699.8 1535.5,699.8" fill="#E6E9EC"/>
<polygon points="1526.5,686.4 1535.5,673 1618,673 1618,699.8 1535.5,699.8" fill="url(#slag)"/>
<polygon points="1530.80,866.90 1523.01,862.40 1523.01,853.40 1530.80,848.90 1538.59,853.40 1538.59,862.40" fill="#E9ECFD"/><g fill="none" stroke="#6E6E73" stroke-width="1.2"><circle cx="1530.8" cy="855.4" r="2.6"/><path d="M1526,862.9 v-0.8 a3,3 0 0 1 3,-3 h3.6 a3,3 0 0 1 3,3 v0.8 z"/></g>
<polygon points="1530.80,913.00 1523.01,908.50 1523.01,899.50 1530.80,895.00 1538.59,899.50 1538.59,908.50" fill="#E9ECFD"/><g fill="none" stroke="#6E6E73" stroke-width="1.2"><circle cx="1530.8" cy="901.5" r="2.6"/><path d="M1526,909 v-0.8 a3,3 0 0 1 3,-3 h3.6 a3,3 0 0 1 3,3 v0.8 z"/></g>
<path d="M1878.3,848.5 L1880.8,845.5 L1883.3,848.5 Z" fill="#BDBDBD"/></svg>
<div class="t" style="left:302.0px;top:220.5px;font-size:15px;line-height:19px;font-weight:400;color:#1F2327;letter-spacing:0.1px">Parametry podstawowe</div>
<div class="t" style="left:354.0px;top:264.0px;font-size:12px;line-height:16px;font-weight:400;color:#7B7B80;">Temat</div>
<div class="t" style="right:1272.5px;top:264.0px;font-size:12px;line-height:16px;font-weight:700;color:#1F2327;letter-spacing:-0.28px">Printer failure</div>
<div class="t" style="left:354.0px;top:295.0px;font-size:12px;line-height:16px;font-weight:400;color:#7B7B80;">Kategoria</div>
<div class="t" style="right:1272.5px;top:295.0px;font-size:12px;line-height:16px;font-weight:700;color:#1F2327;letter-spacing:-0.18px">Awaria sprzętu \ Awaria drukarki</div>
<div class="t" style="left:354.0px;top:327.0px;font-size:12px;line-height:16px;font-weight:400;color:#7B7B80;">Status</div>
<div class="t" style="right:1272.5px;top:327.0px;font-size:12px;line-height:16px;font-weight:700;color:#1F2327;">Nowe</div>
<div class="t" style="left:354.0px;top:358.0px;font-size:12px;line-height:16px;font-weight:400;color:#7B7B80;">Priorytet</div>
<div class="t" style="left:354.0px;top:390.0px;font-size:12px;line-height:16px;font-weight:400;color:#7B7B80;">Utworzono</div>
<div class="t" style="right:1272.5px;top:390.0px;font-size:12px;line-height:16px;font-weight:700;color:#1F2327;letter-spacing:-0.15px">2025.04.04 14:34</div>
<div class="t" style="left:354.0px;top:422.0px;font-size:12px;line-height:16px;font-weight:400;color:#7B7B80;">Termin</div>
<div class="t" style="left:354.0px;top:439.0px;font-size:12px;line-height:16px;font-weight:400;color:#7B7B80;">realizacji</div>
<div class="t" style="left:354.0px;top:470.0px;font-size:12px;line-height:16px;font-weight:400;color:#7B7B80;">Zamknięto</div>
<div class="t" style="left:354.0px;top:502.0px;font-size:12px;line-height:16px;font-weight:400;color:#7B7B80;">Tagi</div>
<div class="t" style="left:704.6px;top:220.0px;font-size:15px;line-height:19px;font-weight:400;color:#1F2327;letter-spacing:0.1px">Powiązane zgłoszenia</div>
<div class="t" style="left:702.5px;top:256.6px;font-size:12px;line-height:16px;font-weight:400;color:#2A2D31;">Podrzędne</div>
<div class="t" style="left:702.5px;top:330.8px;font-size:12px;line-height:16px;font-weight:400;color:#2A2D31;">Nadrzędne</div>
<div class="t" style="left:887.0px;width:400px;text-align:center;top:290.0px;font-size:12px;line-height:16px;font-weight:400;color:#7B7F87;">Brak danych</div>
<div class="t" style="left:887.0px;width:400px;text-align:center;top:360.0px;font-size:12px;line-height:16px;font-weight:400;color:#7B7F87;">Brak danych</div>
<div class="t" style="left:1511.0px;top:220.5px;font-size:15px;line-height:19px;font-weight:400;color:#1F2327;letter-spacing:0.1px">Akceptacje</div>
<div class="t" style="left:705.0px;top:454.8px;font-size:15px;line-height:19px;font-weight:400;color:#1F2327;letter-spacing:-0.25px">Akcje etapu obiegu : Etap 1</div>
<div class="t" style="left:732.0px;top:493.3px;font-size:11px;line-height:15px;font-weight:700;color:#fff;letter-spacing:-0.05px">Admin Admin</div>
<div class="t" style="left:773.0px;top:525.7px;font-size:12px;line-height:16px;font-weight:700;color:#2A2D31;letter-spacing:-0.28px">1 akcja etapu</div>
<div class="t" style="left:1017.3px;top:521.8px;font-size:17px;line-height:21px;font-weight:700;color:#3CC8EE;-webkit-text-stroke:0px">?</div>
<div class="t" style="left:773.0px;top:561.9px;font-size:12px;line-height:16px;font-weight:700;color:#2A2D31;letter-spacing:-0.28px">Odrzuć</div>
<div class="t" style="left:1017.3px;top:558.0px;font-size:17px;line-height:21px;font-weight:700;color:#3CC8EE;-webkit-text-stroke:0px">?</div>
<div class="t" style="left:773.0px;top:597.9px;font-size:12px;line-height:16px;font-weight:700;color:#2A2D31;letter-spacing:-0.28px">Przekaż 1</div>
<div class="t" style="left:1017.3px;top:594.0px;font-size:17px;line-height:21px;font-weight:700;color:#3CC8EE;-webkit-text-stroke:0px">?</div>
<div class="t" style="left:773.0px;top:633.8px;font-size:12px;line-height:16px;font-weight:700;color:#2A2D31;letter-spacing:-0.28px">Przekaż 2</div>
<div class="t" style="left:1017.3px;top:629.9px;font-size:17px;line-height:21px;font-weight:700;color:#3CC8EE;-webkit-text-stroke:0px">?</div>
<div class="t" style="left:1107.5px;top:454.8px;font-size:15px;line-height:19px;font-weight:400;color:#1F2327;letter-spacing:0.1px">Etapy obiegu</div>
<div class="t" style="left:1136.3px;top:494.7px;font-size:11px;line-height:15px;font-weight:400;color:#fff;letter-spacing:0.1px">Etap 1</div>
<div class="t" style="left:1136.3px;top:518.0px;font-size:12px;line-height:16px;font-weight:400;color:#2A2D31;">etap2</div>
<div class="t" style="left:302.0px;top:571.5px;font-size:15px;line-height:19px;font-weight:400;color:#1F2327;letter-spacing:0.1px">Atrybuty</div>
<div class="t" style="left:317.6px;top:614.0px;font-size:12px;line-height:16px;font-weight:400;color:#2A2D31;">Numer</div>
<div class="t" style="left:317.6px;top:628.0px;font-size:12px;line-height:16px;font-weight:400;color:#2A2D31;">kontaktowy</div>
<div class="t" style="left:1510.6px;top:571.5px;font-size:15px;line-height:19px;font-weight:400;color:#1F2327;letter-spacing:0.1px">Postęp SLA</div>
<div class="t" style="left:1526.5px;top:615.3px;font-size:12px;line-height:16px;font-weight:700;color:#2A2D31;letter-spacing:-0.3px">Domyślne SLA dla 'Awaria sprzętu'</div>
<div class="t" style="left:1526.5px;top:632.0px;font-size:12px;line-height:16px;font-weight:700;color:#2A2D31;letter-spacing:-0.2px">(Reakcja)</div>
<div class="t" style="left:1526.5px;top:649.8px;font-size:12px;line-height:16px;font-weight:700;color:#2A2D31;letter-spacing:-0.2px">04.04.2025 14:34:30</div>
<div class="t" style="left:1854.0px;top:650.0px;font-size:12px;line-height:16px;font-weight:700;color:#2A2D31;">-</div>
<div class="t" style="left:1550.4px;top:677.0px;font-size:14px;line-height:18px;font-weight:700;color:#fff;letter-spacing:-0.4px">2g53min</div>
<div class="t" style="left:1510.6px;top:805.9px;font-size:15px;line-height:19px;font-weight:400;color:#1F2327;letter-spacing:0.1px">Powiązane osoby</div>
<div class="t" style="left:1562.8px;top:849.3px;font-size:12px;line-height:16px;font-weight:400;color:#7B7B80;">Organizacja</div>
<div class="t" style="left:1562.8px;top:866.0px;font-size:12px;line-height:16px;font-weight:400;color:#7B7B80;">zgłaszającego</div>
<div class="t" style="right:74.0px;top:849.3px;font-size:12px;line-height:16px;font-weight:700;color:#1F2327;">testers</div>
<div class="t" style="left:1562.8px;top:896.5px;font-size:12px;line-height:16px;font-weight:400;color:#7B7B80;">Zgłaszający</div>
<div class="t" style="right:74.0px;top:896.5px;font-size:12px;line-height:16px;font-weight:700;color:#1F2327;letter-spacing:-0.2px">Admin Admin @</div>
<div class="abs" style="left:1905px;top:0;width:15px;height:911px;background:#FBFBFB"></div>
<div class="abs" style="left:1908px;top:18px;width:9px;height:313px;background:#8A8A8A;border-radius:4.5px"></div>
<svg class="L" viewBox="0 0 1920 911">
<defs>
<filter id="sh" x="-50%" y="-50%" width="200%" height="200%"><feGaussianBlur in="SourceAlpha" stdDeviation="2"/><feOffset dx="2" dy="1"/><feComponentTransfer><feFuncA type="linear" slope="0.35"/></feComponentTransfer><feMerge><feMergeNode/><feMergeNode in="SourceGraphic"/></feMerge></filter>
</defs>
<path d="M1909,12 L1912.5,5.2 L1916,12 Z" fill="#8A8A8A"/>
<path d="M1909,900 L1912.5,906.8 L1916,900 Z" fill="#8A8A8A"/>
<polygon points="32.2,911 32.2,910.2 34.9,908.6 37.6,910.2 37.6,911" fill="#71CBC6"/>
<rect x="1817" y="152.7" width="31" height="29.4" fill="#DCDCE4"/><rect x="1820" y="157" width="26" height="24.3" rx="3" fill="#E6E9FA"/>
<g fill="#3A34D2"><path d="M1830,167.5 L1838.2,175.7" stroke="#3A34D2" stroke-width="2.7" stroke-linecap="round"/><g transform="translate(1830,167.5) rotate(-45)"><path d="M-3.9,0 A3.9,3.9 0 1 0 3.9,0 A3.9,3.9 0 0 0 1.3,-3.7 V-1 H-1.3 V-3.7 A3.9,3.9 0 0 0 -3.9,0 Z"/></g></g>
<g filter="url(#sh)">
<rect x="1815.1" y="150.5" width="35.2" height="33.7" rx="7" fill="none" stroke="#8ED147" stroke-width="4.4"/>
<polygon points="1825.6,185.7 1805.7,205.7 1812,205 1781.2,297.6 1783.2,298.6 1822.8,210 1827.8,213.5" fill="#8ED147" stroke="#8ED147" stroke-width="0.6" stroke-linejoin="round"/>
</g>
</svg>
</body></html>
